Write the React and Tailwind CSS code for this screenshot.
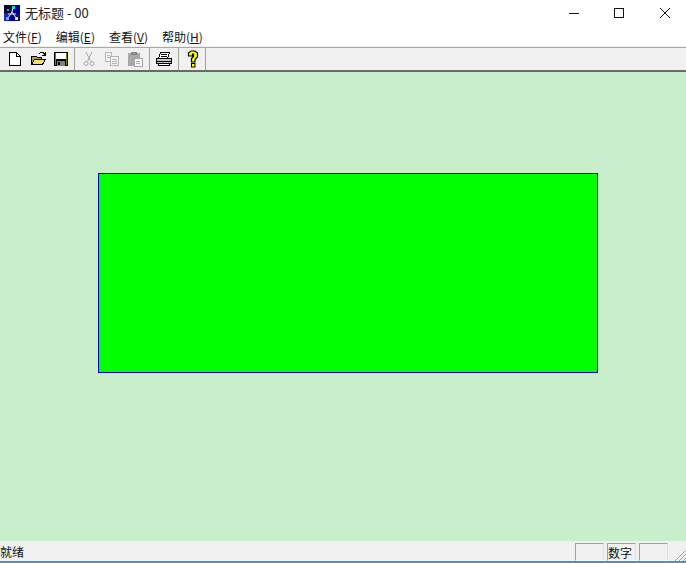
import React from 'react'

const font = { fontFamily: '"Noto Sans CJK SC", "Liberation Sans", sans-serif' }

function AppIcon() {
    return (
        <svg width="16" height="16" viewBox="0 0 16 16" shapeRendering="crispEdges">
            <rect width="16" height="16" fill="#0000a0" />
            <rect x="0" y="0" width="7" height="8" fill="#080830" />
            <rect x="0" y="8" width="5" height="8" fill="#2020d0" />
            <rect x="11" y="8" width="5" height="8" fill="#101070" />
            <path d="M9 2L8 7M4 9h8M8 7l-4 6M8 7l4 6" stroke="#f0f0f0" fill="none" shapeRendering="auto" />
            <rect x="8" y="1" width="3" height="3" fill="#30d0d0" />
            <rect x="3" y="4" width="2" height="2" fill="#30b0b0" />
            <rect x="2" y="12" width="3" height="3" fill="#30d0d0" />
            <rect x="11" y="12" width="3" height="3" fill="#d0f0f0" />
        </svg>
    )
}

function NewIcon() {
    return (
        <svg width="16" height="16" viewBox="0 0 16 16" shapeRendering="crispEdges">
            <path d="M2.5 1.5h7l4 4v9h-11z" fill="#fff" stroke="#000" />
            <path d="M9.5 1.5v4h4" fill="none" stroke="#000" />
        </svg>
    )
}

function OpenIcon() {
    return (
        <svg width="17" height="16" viewBox="0 0 17 16" shapeRendering="crispEdges">
            <path d="M1.5 5.5h5l1 1h4v7h-10z" fill="#b8a040" stroke="#000" />
            <path d="M1.5 13.5l3-5h11l-3 5z" fill="#f0e070" stroke="#000" />
            <path d="M9 3l2-1.500h2l2 2M15 1v3h-3" fill="none" stroke="#000" />
        </svg>
    )
}

function SaveIcon() {
    return (
        <svg width="16" height="16" viewBox="0 0 16 16" shapeRendering="crispEdges">
            <rect x="1" y="1" width="14" height="14" fill="#000" />
            <rect x="3" y="2" width="10" height="6" fill="#fff" />
            <rect x="2" y="2" width="1" height="12" fill="#808000" />
            <rect x="13" y="2" width="1" height="12" fill="#808000" />
            <rect x="4" y="10" width="8" height="5" fill="#808080" />
            <rect x="5" y="11" width="2" height="3" fill="#000" />
        </svg>
    )
}

function CutIcon() {
    return (
        <svg width="16" height="16" viewBox="0 0 16 16" fill="none" stroke="#a8a8a8">
            <path d="M5 1l4.500 9M11 1L6.500 10" />
            <circle cx="5" cy="12.500" r="2" />
            <circle cx="11" cy="12.500" r="2" />
        </svg>
    )
}

function CopyIcon() {
    return (
        <svg width="16" height="16" viewBox="0 0 16 16" fill="#f4f4f4" stroke="#b4b4b4" shapeRendering="crispEdges">
            <path d="M1.500 1.500h6v9h-6z" />
            <path d="M6.500 5.500h8v9h-8z" />
            <path d="M3 4h3M3 6h3M8 8h5M8 10h5M8 12h5" />
        </svg>
    )
}

function PasteIcon() {
    return (
        <svg width="16" height="16" viewBox="0 0 16 16" shapeRendering="crispEdges">
            <rect x="1" y="2" width="12" height="13" fill="#a8a8a8" />
            <rect x="4" y="1" width="6" height="3" fill="#888" />
            <rect x="7" y="7" width="8" height="8" fill="#f4f4f4" stroke="#a8a8a8" />
            <path d="M9 10h4M9 12h4" stroke="#b0b0b0" />
        </svg>
    )
}

function PrintIcon() {
    return (
        <svg width="18" height="16" viewBox="0 0 18 16" shapeRendering="crispEdges">
            <path d="M5.500 1.500h9l-2 6h-9z" fill="#fff" stroke="#000" />
            <path d="M1.500 7.500h15v5h-15z" fill="#c8c8c8" stroke="#000" />
            <path d="M3.500 12.500h11v2h-11z" fill="#fff" stroke="#000" />
            <path d="M2 10h14" stroke="#000" />
            <path d="M6 3.500h6M5.500 5.500h6" stroke="#000" />
        </svg>
    )
}

function HelpIcon() {
    return (
        <svg width="12" height="18" viewBox="0 0 12 18">
            <path d="M1.500 6V3L4 1h4l2.500 2v4L8 9.500v2.500H4.500V8.500L6.500 6.500V4H5.500v2z" fill="#ffff00" stroke="#000" strokeWidth="1.200" />
            <rect x="4.500" y="13.500" width="3.500" height="3.500" fill="#ffff00" stroke="#000" />
        </svg>
    )
}

function Sep() {
    return <div className="w-[2px] h-[22px] border-l border-[#a0a0a0] border-r-white shrink-0" />
}

function Menu({ label, hot }) {
    return (
        <span className="text-[12px] leading-[18px] text-[#111]">
            {label}(<span className="underline">{hot}</span>)
        </span>
    )
}

function StatusCell({ children, className }) {
    return (
        <div className={`h-[18px] border border-t-[#a0a0a0] border-l-[#a0a0a0] border-r-[#e0e0e0] border-b-[#f8f8f8] text-[12px] leading-[17px] text-[#111] shrink-0 ${className}`}>
            {children}
        </div>
    )
}

export default function App() {
    return (
        <div className="w-[686px] h-[563px] flex flex-col bg-white overflow-hidden" style={font}>
            {/* title bar */}
            <div className="h-[26px] flex items-center pl-[4px] shrink-0 bg-white">
                <AppIcon />
                <span className="ml-[5px] text-[13px] text-[#222]">无标题 - 00</span>
                <div className="ml-auto flex items-center">
                    <svg width="12" height="12" viewBox="0 0 12 12" className="mr-[33px]" shapeRendering="crispEdges">
                        <path d="M1 6.500h10" stroke="#111" />
                    </svg>
                    <svg width="12" height="12" viewBox="0 0 12 12" className="mr-[34px]" shapeRendering="crispEdges">
                        <rect x="1.500" y="1.500" width="9" height="9" fill="none" stroke="#111" />
                    </svg>
                    <svg width="12" height="12" viewBox="0 0 12 12" className="mr-[15px]">
                        <path d="M1 1l10 10M11 1L1 11" stroke="#111" />
                    </svg>
                </div>
            </div>

            {/* menu */}
            <div className="h-[21px] flex items-start gap-[14px] pl-[3px] pt-[2px] shrink-0 border-b border-[#f0f0f0]">
                <Menu label="文件" hot="F" />
                <Menu label="编辑" hot="E" />
                <Menu label="查看" hot="V" />
                <Menu label="帮助" hot="H" />
            </div>

            {/* toolbar */}
            <div className="h-[25px] bg-[#f0f0f0] border-t border-t-[#a8a8a8] border-b-2 border-b-[#696969] flex items-center pl-[7px] shrink-0">
                <NewIcon />
                <div className="ml-[7px]"><OpenIcon /></div>
                <div className="ml-[6px]"><SaveIcon /></div>
                <div className="ml-[5px]"><Sep /></div>
                <div className="ml-[5px]"><CutIcon /></div>
                <div className="ml-[7px]"><CopyIcon /></div>
                <div className="ml-[7px]"><PasteIcon /></div>
                <div className="ml-[6px]"><Sep /></div>
                <div className="ml-[4px]"><PrintIcon /></div>
                <div className="ml-[5px]"><Sep /></div>
                <div className="ml-[7px]"><HelpIcon /></div>
                <div className="ml-[6px]"><Sep /></div>
            </div>

            {/* canvas */}
            <div className="flex-1 bg-[#c9eecb] pl-[98px] pt-[101px]">
                <div className="w-[500px] h-[200px] bg-[#00ff00] border border-[#0000c8]" />
            </div>

            {/* status bar */}
            <div className="h-[20px] bg-[#f0f0f0] flex items-end shrink-0 relative">
                <span className="text-[12px] leading-[18px] text-[#111]">就绪</span>
                <div className="ml-auto flex gap-[3px] mr-[18px]">
                    <StatusCell className="w-[29px]" />
                    <StatusCell className="w-[29px]">数字</StatusCell>
                    <StatusCell className="w-[29px]" />
                </div>
                <svg width="12" height="12" viewBox="0 0 12 12" className="absolute right-0 bottom-0">
                    <path d="M12 1L1 12M12 5L5 12M12 9L9 12" stroke="#a0a0a0" />
                </svg>
            </div>
            <div className="h-[2px] bg-[#5b8cb8] shrink-0" />
        </div>
    )
}
